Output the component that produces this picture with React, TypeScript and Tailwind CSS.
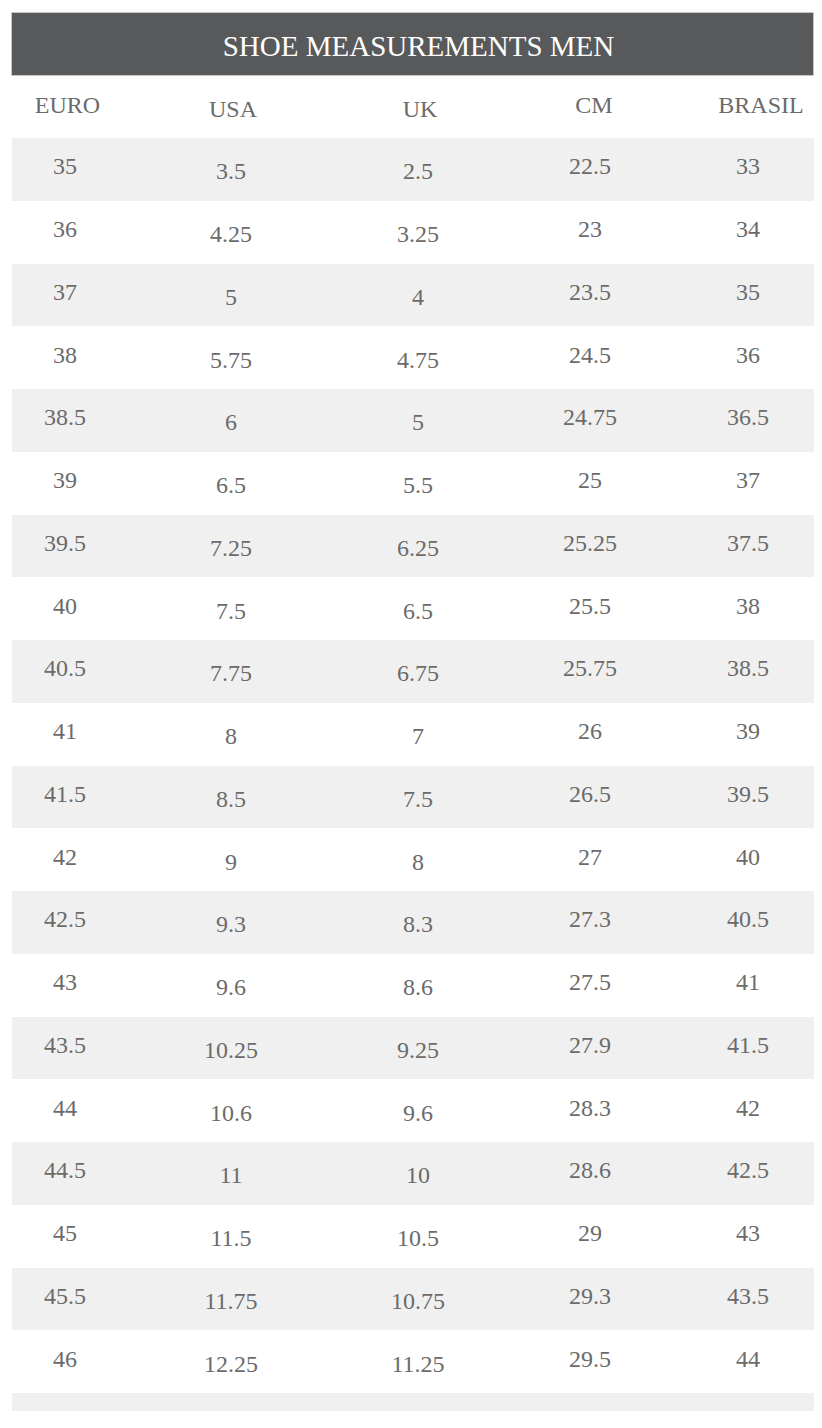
import React from "react";

const rows: string[][] = [
  ["35", "3.5", "2.5", "22.5", "33"],
  ["36", "4.25", "3.25", "23", "34"],
  ["37", "5", "4", "23.5", "35"],
  ["38", "5.75", "4.75", "24.5", "36"],
  ["38.5", "6", "5", "24.75", "36.5"],
  ["39", "6.5", "5.5", "25", "37"],
  ["39.5", "7.25", "6.25", "25.25", "37.5"],
  ["40", "7.5", "6.5", "25.5", "38"],
  ["40.5", "7.75", "6.75", "25.75", "38.5"],
  ["41", "8", "7", "26", "39"],
  ["41.5", "8.5", "7.5", "26.5", "39.5"],
  ["42", "9", "8", "27", "40"],
  ["42.5", "9.3", "8.3", "27.3", "40.5"],
  ["43", "9.6", "8.6", "27.5", "41"],
  ["43.5", "10.25", "9.25", "27.9", "41.5"],
  ["44", "10.6", "9.6", "28.3", "42"],
  ["44.5", "11", "10", "28.6", "42.5"],
  ["45", "11.5", "10.5", "29", "43"],
  ["45.5", "11.75", "10.75", "29.3", "43.5"],
  ["46", "12.25", "11.25", "29.5", "44"],
];

const widths = ["w-[106px]", "w-[226px]", "w-[148px]", "w-[196px]", "w-[126px] pr-[6px]"];
const vshift = ["pb-[6px]", "pt-[4px]", "pt-[4px]", "pb-[6px]", "pb-[6px]"];
const headers = ["EURO", "USA", "UK", "CM", "BRASIL"];
const headerShift = [
  "pl-[5px] pb-[4px]",
  "pl-[4px] pt-[4px]",
  "pl-[4px] pt-[4px]",
  "pl-[8px] pb-[4px]",
  "pl-[26px] pb-[4px]",
];

export default function App() {
  return (
    <div
      className="w-[822px] h-[1428px] bg-white pt-[12px] pl-[11px] pr-[8px] text-[#6b6b6b]"
      style={{ fontFamily: '"Liberation Serif", "Times New Roman", serif' }}
    >
      <div className="h-[64px] bg-[#58595b] border border-[#c6c6c6] flex items-center justify-center pt-[4px] pl-[12px]">
        <span className="text-white text-[29px] leading-none">SHOE MEASUREMENTS MEN</span>
      </div>
      <div className="pl-[1px]">
        <div className="flex h-[62px]">
          {headers.map((h, i) => (
            <div key={h} className={`${widths[i]} flex items-center justify-center ${headerShift[i]}`}>
              <span className="text-[24px] leading-none">{h}</span>
            </div>
          ))}
        </div>
        {rows.map((r, ri) => (
          <div key={ri} className={`flex h-[62.75px] ${ri % 2 === 0 ? "bg-[#f0f0f0]" : "bg-white"}`}>
            {r.map((v, ci) => (
              <div key={ci} className={`${widths[ci]} flex items-center justify-center ${vshift[ci]}`}>
                <span className="text-[24px] leading-none">{v}</span>
              </div>
            ))}
          </div>
        ))}
        <div className="h-[18px] bg-[#f0f0f0]" />
      </div>
    </div>
  );
}
